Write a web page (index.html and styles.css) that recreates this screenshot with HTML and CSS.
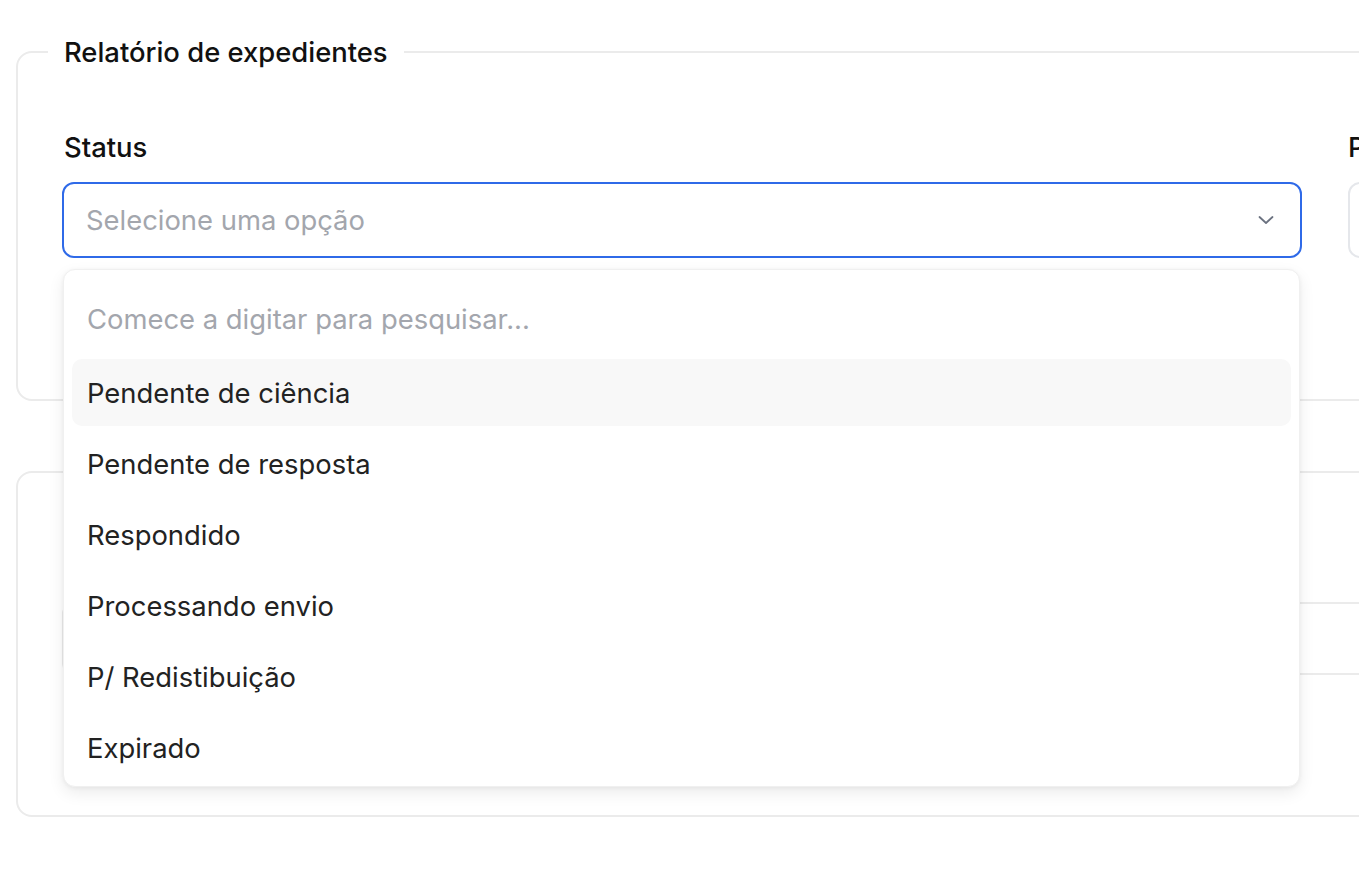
FILE: index.html
```html
<!DOCTYPE html>
<html lang="pt-BR">
<head>
<meta charset="utf-8">
<title>Relatório de expedientes</title>
<link rel="stylesheet" href="styles.css">
</head>
<body>
<div class="page">
  <fieldset class="card card-filters">
    <legend class="card-title">Relatório de expedientes</legend>
    <div class="filters">
      <div class="field">
        <label class="field-label">Status</label>
        <div class="select-wrap">
          <div class="select is-open">
            <span class="placeholder">Selecione uma opção</span>
            <svg class="chevron" width="24" height="24" viewBox="0 0 24 24" fill="none" stroke="currentColor" stroke-width="1.8" stroke-linecap="round" stroke-linejoin="round"><path d="M5.5 9l6.5 6 6.5-6"/></svg>
          </div>
          <div class="dropdown">
            <div class="search">Comece a digitar para pesquisar...</div>
            <ul class="options">
              <li class="option is-active">Pendente de ciência</li>
              <li class="option">Pendente de resposta</li>
              <li class="option">Respondido</li>
              <li class="option">Processando envio</li>
              <li class="option">P/ Redistibuição</li>
              <li class="option">Expirado</li>
            </ul>
          </div>
        </div>
      </div>
      <div class="field">
        <label class="field-label">Período</label>
        <div class="select select-plain"></div>
      </div>
    </div>
  </fieldset>

  <section class="card card-results">
    <div class="results-head"></div>
  </section>
</div>
</body>
</html>
```

FILE: styles.css
```css
* { box-sizing: border-box; }

html, body {
  margin: 0;
  padding: 0;
  background: #ffffff;
  overflow: hidden;
}

body {
  font-family: Inter, "Noto Sans", "Liberation Sans", sans-serif;
  color: #111827;
  font-size: 27.4px;
}

.page {
  width: 2000px;
  padding: 38px 0 0 16px;
  display: flex;
  flex-direction: column;
  gap: 70px;
}

.card {
  margin: 0;
  border: 2px solid #ebebeb;
  border-radius: 16px;
  background: #fff;
}

.card-filters {
  padding: 67px 44px 141px 46px;
  min-width: 0;
}

.card-title {
  margin-left: -16px;
  padding: 0 16px;
  font-size: 27.4px;
  line-height: 28px;
  font-weight: 500;
  color: #111;
}

.filters {
  display: grid;
  grid-template-columns: 1238px 1240px;
  column-gap: 46px;
}

.field {
  display: flex;
  flex-direction: column;
  gap: 21px;
}

.field-label {
  font-size: 27.4px;
  line-height: 28px;
  font-weight: 500;
  color: #111;
}

.select-wrap {
  position: relative;
}

.select {
  height: 76px;
  border: 2px solid #e5e7eb;
  border-radius: 12px;
  display: flex;
  align-items: center;
  justify-content: space-between;
  padding: 0 22px 0 22px;
  background: #fff;
}

.field:first-child .select-wrap {
  margin-left: -2px;
}

.select.is-open {
  border: 2.5px solid #2f6ae8;
}

.placeholder {
  color: #a3a6ad;
  font-size: 27.4px;
}

.chevron {
  color: #6b7280;
}

.dropdown {
  position: absolute;
  top: 87px;
  left: 1px;
  width: 1237px;
  height: 518px;
  background: #fff;
  border: 1px solid #f0f0f0;
  border-radius: 12px;
  box-shadow: 0 6px 16px rgba(0, 0, 0, 0.08), 0 1px 4px rgba(0, 0, 0, 0.05);
  padding: 8px;
  z-index: 10;
}

.search {
  height: 81px;
  display: flex;
  align-items: center;
  padding: 0 15px;
  color: #a3a6ad;
  font-size: 27.4px;
}

.options {
  list-style: none;
  margin: 0;
  padding: 0;
  display: flex;
  flex-direction: column;
  gap: 4px;
}

.option {
  height: 67px;
  display: flex;
  align-items: center;
  padding: 0 15px;
  border-radius: 10px;
  color: #222;
  font-size: 27.4px;
}

.option.is-active {
  background: #f8f8f8;
}

.card-results {
  height: 346px;
  padding: 129px 44px 0 44px;
}

.results-head {
  height: 73px;
  border: 2px solid #ebebeb;
  border-radius: 12px;
}
```
